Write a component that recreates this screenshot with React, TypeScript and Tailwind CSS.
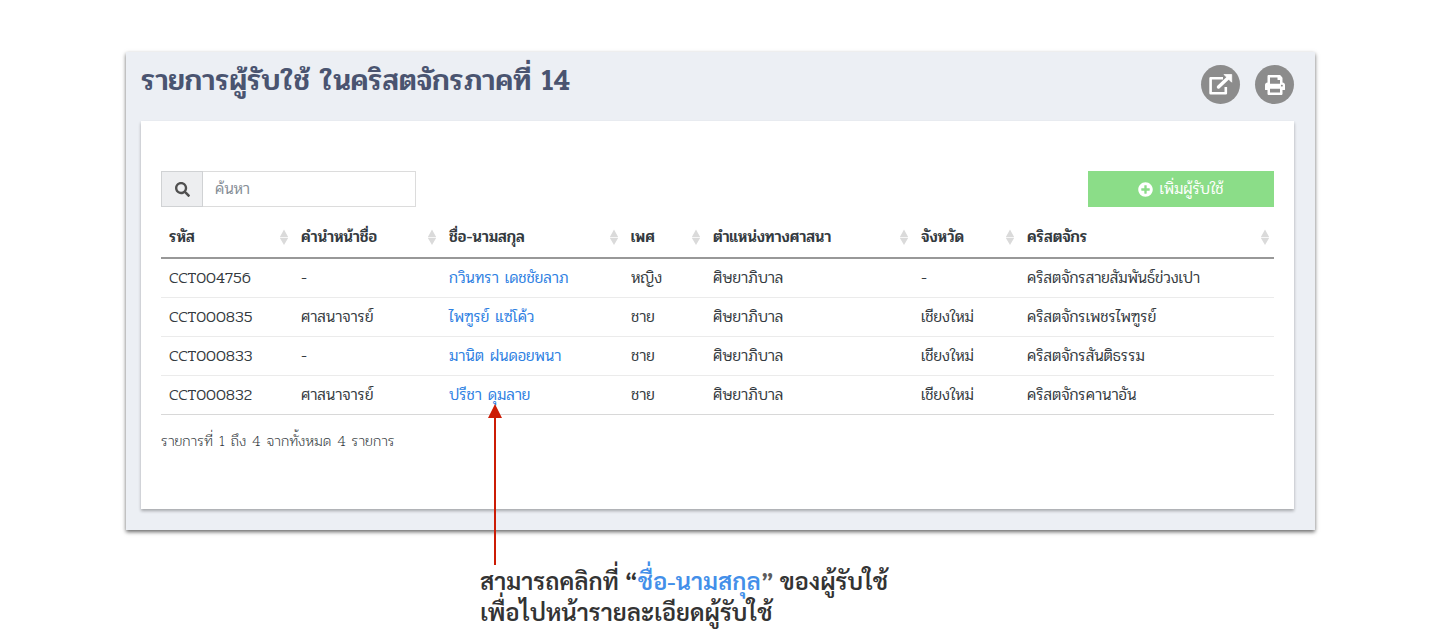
import { FaPlusCircle, FaPrint, FaSearch } from "react-icons/fa";

interface Minister {
  code: string;
  prefix: string;
  name: string;
  gender: string;
  position: string;
  province: string;
  church: string;
}

const columns = [
  { label: "รหัส", width: "w-[132px]" },
  { label: "คำนำหน้าชื่อ", width: "w-[148px]" },
  { label: "ชื่อ-นามสกุล", width: "w-[182px]" },
  { label: "เพศ", width: "w-[82px]" },
  { label: "ตำแหน่งทางศาสนา", width: "w-[208px]" },
  { label: "จังหวัด", width: "w-[106px]" },
  { label: "คริสตจักร", width: "w-auto" },
];

const ministers: Minister[] = [
  { code: "CCT004756", prefix: "-", name: "กวินทรา เดชชัยลาภ", gender: "หญิง", position: "ศิษยาภิบาล", province: "-", church: "คริสตจักรสายสัมพันธ์ข่วงเปา" },
  { code: "CCT000835", prefix: "ศาสนาจารย์", name: "ไพฑูรย์ แซ่โค้ว", gender: "ชาย", position: "ศิษยาภิบาล", province: "เชียงใหม่", church: "คริสตจักรเพชรไพฑูรย์" },
  { code: "CCT000833", prefix: "-", name: "มานิต ฝนดอยพนา", gender: "ชาย", position: "ศิษยาภิบาล", province: "เชียงใหม่", church: "คริสตจักรสันติธรรม" },
  { code: "CCT000832", prefix: "ศาสนาจารย์", name: "ปรีชา ดุมลาย", gender: "ชาย", position: "ศิษยาภิบาล", province: "เชียงใหม่", church: "คริสตจักรคานาอัน" },
];

function SortIcon() {
  return (
    <svg className="h-4 w-2 shrink-0" viewBox="0 0 8 16" fill="#dadada" aria-hidden="true">
      <path d="M4 0.5 8.2 8H-.2ZM4 16 -.2 8.8h8.4Z" />
    </svg>
  );
}

function OpenIcon() {
  return (
    <svg className="size-6" viewBox="0 0 24 24" fill="none" stroke="currentColor" aria-hidden="true">
      <path d="M14 5.3H1.6v15h15.2V14" strokeWidth="2.6" strokeLinejoin="round" />
      <path d="M9.5 14 19.5 4.5" strokeWidth="3.4" strokeLinecap="round" />
      <path d="M15 1.5h7.7v7.7z" fill="currentColor" strokeWidth="0.8" strokeLinejoin="round" />
    </svg>
  );
}

export default function App() {
  return (
    <div className="bg-white pt-[52px] pb-4 font-['Pridi','Noto_Sans','Noto_Sans_Thai',sans-serif] text-base leading-6 font-light text-[#343a40]">
      <main className="mr-[125px] ml-[126px] bg-[#eceff4] pr-[21px] pb-[21px] pl-[15px] shadow-[0_2px_4px_rgba(0,0,0,0.6)]">
        <header className="flex h-[69px] items-start justify-between pt-[13px]">
          <h1 className="text-[30px] leading-8 font-medium text-[#4a5470]">รายการผู้รับใช้ ในคริสตจักรภาคที่ 14</h1>
          <div className="flex gap-[15px]">
            <button type="button" aria-label="เปิดหน้าต่างใหม่" className="flex size-[39px] items-center justify-center rounded-full bg-[#8c8c8c] text-white">
              <OpenIcon />
            </button>
            <button type="button" aria-label="พิมพ์" className="flex size-[39px] items-center justify-center rounded-full bg-[#8c8c8c] text-white">
              <FaPrint className="size-5" />
            </button>
          </div>
        </header>

        <section className="bg-white px-5 pt-[50px] pb-[58px] shadow-[0_2px_3px_rgba(0,0,0,0.3)]">
          <div className="flex h-9 justify-between">
            <div className="flex w-[255px]">
              <label htmlFor="search" className="flex w-[42px] items-center justify-center border border-[#d0d2d4] bg-[#edeef0] text-[#505050]">
                <FaSearch className="size-[15px]" aria-label="ค้นหา" />
              </label>
              <input id="search" type="search" placeholder="ค้นหา" className="min-w-0 flex-1 border border-l-0 border-[#dcdcdc] px-3 outline-none placeholder:text-[#868e96]" />
            </div>
            <button type="button" className="flex w-[186px] items-center justify-center gap-[6px] bg-[#8bdd88] text-white">
              <FaPlusCircle className="size-[15px]" />
              เพิ่มผู้รับใช้
            </button>
          </div>

          <table className="mt-[10px] w-full table-fixed border-b border-[#d8d8d8] text-left">
            <thead>
              <tr className="h-[41px] border-b-2 border-[#989898]">
                {columns.map((column) => (
                  <th key={column.label} scope="col" className={`${column.width} pr-[5px] pl-2 font-medium`}>
                    <span className="flex items-center justify-between whitespace-nowrap">
                      {column.label}
                      <SortIcon />
                    </span>
                  </th>
                ))}
              </tr>
            </thead>
            <tbody>
              {ministers.map((minister) => (
                <tr key={minister.code} className="h-[39px] border-b border-[#ebebeb] whitespace-nowrap last:border-b-0">
                  <td className="px-2">{minister.code}</td>
                  <td className="px-2">{minister.prefix}</td>
                  <td className="px-2"><a href="#detail" className="text-[#2d80e2]">{minister.name}</a></td>
                  <td className="px-2">{minister.gender}</td>
                  <td className="px-2">{minister.position}</td>
                  <td className="px-2">{minister.province}</td>
                  <td className="px-2">{minister.church}</td>
                </tr>
              ))}
            </tbody>
          </table>
          <p className="mt-4 text-[15px] leading-5 font-extralight">รายการที่ 1 ถึง 4 จากทั้งหมด 4 รายการ</p>
        </section>
      </main>

      <aside className="relative mt-[35px] ml-[480px] font-['Sarabun','Noto_Sans_Thai',sans-serif] text-2xl leading-[31px] font-semibold text-[#333]">
        <svg className="absolute bottom-full left-2 h-[161px] w-[14px]" viewBox="0 0 14 161" fill="#cc1c05" aria-hidden="true">
          <path d="M7 0 14 14H8v147H6V14H0Z" />
        </svg>
        <p>
          สามารถคลิกที่ “<span className="text-[#438fe9]">ชื่อ-นามสกุล</span><span className="text-[#5c5c5c]">”</span> ของผู้รับใช้
          <br />
          เพื่อไปหน้ารายละเอียดผู้รับใช้
        </p>
      </aside>
    </div>
  );
}
